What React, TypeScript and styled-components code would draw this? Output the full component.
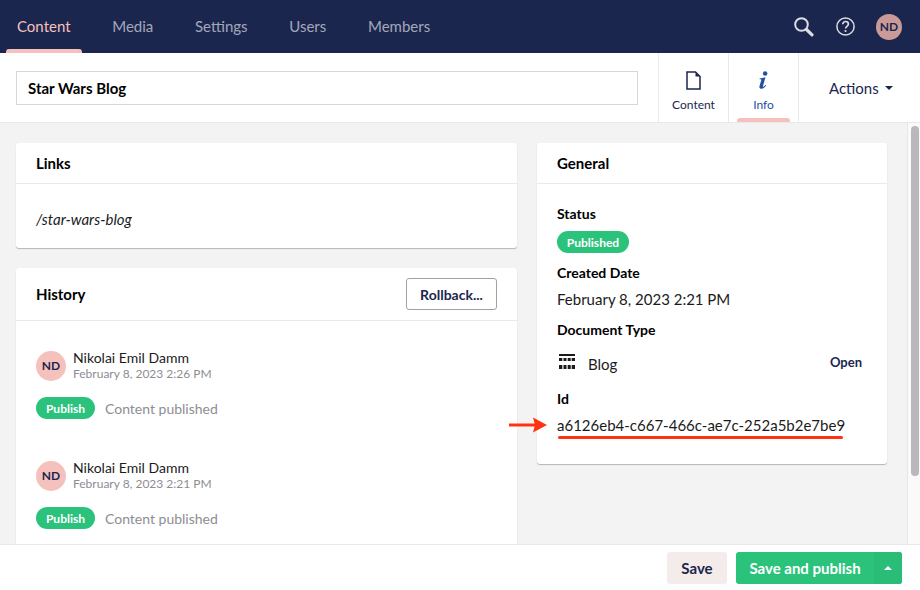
import React from "react";
import styled, { createGlobalStyle } from "styled-components";

const GlobalStyle = createGlobalStyle`
  html, body { margin: 0; padding: 0; }
  body {
    font-family: Lato, "Open Sans", sans-serif;
    color: #1b1b1b;
    background: #fff;
  }
  * { box-sizing: border-box; }
`;

const sections = ["Content", "Media", "Settings", "Users", "Members"];
const history = [
  { date: "February 8, 2023 2:26 PM" },
  { date: "February 8, 2023 2:21 PM" },
];

const DocIcon = () => (
  <svg width="15" height="19" viewBox="0 0 15 19" fill="none" stroke="#1b264f" strokeWidth="1.5">
    <path d="M1 1h8.500L14 5.500V18H1z" />
    <path d="M9.500 1 14 5.500H9.500z" fill="#1b264f" stroke="none" />
  </svg>
);

const InfoIcon = () => (
  <svg width="11" height="19" viewBox="0 0 12 21" fill="#2152a3">
    <circle cx="7.800" cy="2.800" r="2.500" />
    <path d="M1.600 8.300 8.200 7 5.400 16.500c-.2.800.5 1 1 .6l2-1.700.6.600c-1.400 1.800-3 3.600-5.200 3.600-1.900 0-2.700-1.200-2.200-2.900l1.900-6.500c.2-.9-.3-1.100-1.900-1z" />
  </svg>
);

const BlogIcon = () => (
  <BlogSvg width="16" height="15" viewBox="0 0 16 15" fill="#1b1b1b">
    <rect x="0" y="0" width="16" height="2" />
    <rect x="0" y="4" width="3.300" height="3" />
    <rect x="4.500" y="4" width="3" height="3" />
    <rect x="8.700" y="4" width="3" height="3" />
    <rect x="12.700" y="4" width="3.300" height="3" />
    <rect x="0" y="11" width="3.300" height="4" />
    <rect x="4.500" y="11" width="3" height="4" />
    <rect x="8.700" y="11" width="3" height="4" />
    <rect x="12.700" y="11" width="3.300" height="4" />
  </BlogSvg>
);

const App: React.FC = () => {
  return (
    <Page>
      <GlobalStyle />
      <TopBar>
        <Sections>
          {sections.map((s, i) => (
            <SectionLink key={s} $active={i === 0}>
              {s}
            </SectionLink>
          ))}
        </Sections>
        <Tools>
          <svg width="21" height="20" viewBox="0 0 21 20" fill="none" stroke="#dcdde3" strokeLinecap="round">
            <circle cx="7.500" cy="7.500" r="6.300" strokeWidth="2" />
            <path d="M12.500 12.500l5.500 5.300" strokeWidth="3.200" />
          </svg>
          <svg width="19" height="19" viewBox="0 0 19 19" fill="none" stroke="#dcdde3" strokeWidth="1.500">
            <circle cx="9.500" cy="9.500" r="8.600" />
            <path d="M6.800 7.300c0-1.700 1.200-2.800 2.800-2.800s2.800 1 2.800 2.500c0 2.300-2.800 2.300-2.800 4.500" strokeWidth="1.700" />
            <circle cx="9.500" cy="14" r="1.100" fill="#dcdde3" stroke="none" />
          </svg>
          <TopAvatar>ND</TopAvatar>
        </Tools>
      </TopBar>

      <EditorHeader>
        <NameWrap>
          <NameInput readOnly value="Star Wars Blog" />
        </NameWrap>
        <AppTab>
          <AppTabIcon>
            <DocIcon />
          </AppTabIcon>
          <AppTabLabel>Content</AppTabLabel>
        </AppTab>
        <AppTab $active>
          <AppTabIcon>
            <InfoIcon />
          </AppTabIcon>
          <AppTabLabel>Info</AppTabLabel>
        </AppTab>
        <ActionsButton>
          Actions
          <Caret />
        </ActionsButton>
      </EditorHeader>

      <Body>
        <Columns>
          <LeftColumn>
            <Card>
              <CardHeader>
                <CardTitle>Links</CardTitle>
              </CardHeader>
              <LinkRow>/star-wars-blog</LinkRow>
            </Card>
            <Card>
              <HistoryHeader>
                <CardTitle>History</CardTitle>
                <RollbackButton>Rollback...</RollbackButton>
              </HistoryHeader>
              <HistoryList>
                {history.map((h) => (
                  <HistoryItem key={h.date}>
                    <UserRow>
                      <UserAvatar>ND</UserAvatar>
                      <div>
                        <UserName>Nikolai Emil Damm</UserName>
                        <UserDate>{h.date}</UserDate>
                      </div>
                    </UserRow>
                    <ActionRow>
                      <PublishBadge>Publish</PublishBadge>
                      <ActionText>Content published</ActionText>
                    </ActionRow>
                  </HistoryItem>
                ))}
              </HistoryList>
            </Card>
          </LeftColumn>

          <RightColumn>
            <Card>
              <CardHeader>
                <CardTitle>General</CardTitle>
              </CardHeader>
              <GeneralBody>
                <FieldLabel>Status</FieldLabel>
                <StatusBadge>Published</StatusBadge>
                <FieldLabel $top={11}>Created Date</FieldLabel>
                <FieldValue>February 8, 2023 2:21 PM</FieldValue>
                <FieldLabel $top={12}>Document Type</FieldLabel>
                <DocTypeRow>
                  <BlogIcon />
                  <DocTypeName>Blog</DocTypeName>
                  <OpenLink>Open</OpenLink>
                </DocTypeRow>
                <FieldLabel $top={14}>Id</FieldLabel>
                <IdValue>
                  a6126eb4-c667-466c-ae7c-252a5b2e7be9
                  <RedArrow width="38" height="16" viewBox="0 0 38 16">
                    <path d="M0 8h26" stroke="#ff3211" strokeWidth="3" />
                    <path d="M24 0.500 38 8 24 15.500 26 8z" fill="#ff3211" />
                  </RedArrow>
                  <RedLine />
                </IdValue>
              </GeneralBody>
            </Card>
          </RightColumn>
        </Columns>
        <ScrollTrack>
          <ScrollThumb />
        </ScrollTrack>
      </Body>

      <Footer>
        <SaveButton>Save</SaveButton>
        <PublishGroup>
          <PublishMain>Save and publish</PublishMain>
          <PublishCaret>
            <CaretUp />
          </PublishCaret>
        </PublishGroup>
      </Footer>
    </Page>
  );
};

export default App;

const Page = styled.div`
  width: 920px;
  height: 590px;
  display: flex;
  flex-direction: column;
  overflow: hidden;
`;

const TopBar = styled.header`
  height: 53px;
  flex: none;
  background: #1b264f;
  display: flex;
  justify-content: space-between;
  padding: 0 18px 0 6px;
`;

const Sections = styled.nav`
  display: flex;
`;

const SectionLink = styled.a<{ $active?: boolean }>`
  position: relative;
  font-size: 15px;
  line-height: 53px;
  padding: 0 11px;
  margin-right: 19.7px;
  color: ${({ $active }) => ($active ? "#f5c1bc" : "rgba(255,255,255,0.6)")};
  ${({ $active }) =>
    $active &&
    `&::after {
      content: "";
      position: absolute;
      left: 0;
      right: 0;
      bottom: 0;
      height: 4px;
      background: #f5c1bc;
      border-radius: 3px 3px 0 0;
    }`}
`;

const Tools = styled.div`
  display: flex;
  align-items: center;
  gap: 21px;
`;

const TopAvatar = styled.div`
  width: 26px;
  height: 26px;
  border-radius: 50%;
  background: #c99a97;
  color: #1b264f;
  font-size: 12px;
  font-weight: 700;
  display: flex;
  align-items: center;
  justify-content: center;
`;

const EditorHeader = styled.div`
  height: 70px;
  flex: none;
  display: flex;
  background: #fff;
  border-bottom: 1px solid #e9e9eb;
`;

const NameWrap = styled.div`
  flex: 1;
  padding: 18px 20px 0 16px;
`;

const NameInput = styled.input`
  width: 100%;
  height: 34px;
  border: 1px solid #d8d7d9;
  padding: 0 11px;
  font: 700 15px Lato, sans-serif;
  color: #000;
  outline: none;
`;

const AppTab = styled.div<{ $active?: boolean }>`
  position: relative;
  width: 70px;
  border-left: 1px solid #e9e9eb;
  display: flex;
  flex-direction: column;
  align-items: center;
  color: ${({ $active }) => ($active ? "#2152a3" : "#1b264f")};
  ${({ $active }) =>
    $active &&
    `&::after {
      content: "";
      position: absolute;
      left: 8px;
      right: 8px;
      bottom: 0;
      height: 4px;
      background: #f5c1bc;
      border-radius: 3px 3px 0 0;
    }`}
`;

const AppTabIcon = styled.div`
  height: 21px;
  margin-top: 17px;
  display: flex;
  align-items: center;
`;

const AppTabLabel = styled.div`
  font-size: 12px;
  line-height: 15px;
  margin-top: 6px;
`;

const ActionsButton = styled.div`
  width: 122px;
  border-left: 1px solid #e9e9eb;
  color: #1b264f;
  font-size: 15px;
  display: flex;
  align-items: center;
  padding: 0 0 0 30px;
  gap: 6px;
`;

const Caret = styled.span`
  width: 0;
  height: 0;
  border-left: 4px solid transparent;
  border-right: 4px solid transparent;
  border-top: 4px solid #1b264f;
`;

const Body = styled.main`
  flex: 1;
  min-height: 0;
  background: #f4f3f4;
  display: flex;
  overflow: hidden;
`;

const Columns = styled.div`
  flex: 1;
  display: flex;
  gap: 20px;
  padding: 20px 20px 0 16px;
`;

const LeftColumn = styled.div`
  flex: none;
  width: 501px;
  display: flex;
  flex-direction: column;
  gap: 20px;
`;

const RightColumn = styled.div`
  flex: none;
  width: 350px;
`;

const Card = styled.section`
  background: #fff;
  border-radius: 3px;
  box-shadow: 0 1px 1px rgba(0, 0, 0, 0.25);
`;

const CardHeader = styled.div`
  height: 41px;
  padding: 0 20px;
  display: flex;
  align-items: center;
  border-bottom: 1px solid #e9e9eb;
`;

const CardTitle = styled.h3`
  margin: 0;
  font-size: 15px;
  font-weight: 700;
  color: #000;
`;

const LinkRow = styled.div`
  height: 64px;
  padding: 6px 20px 0;
  display: flex;
  align-items: center;
  font-size: 15px;
  font-style: italic;
  color: #1b1b1b;
`;

const HistoryHeader = styled(CardHeader)`
  height: 53px;
  justify-content: space-between;
`;

const RollbackButton = styled.button`
  width: 91px;
  height: 32px;
  background: #fff;
  border: 1px solid #a1a1a5;
  border-radius: 3px;
  color: #1b264f;
  font: 700 14px Lato, sans-serif;
  padding: 0;
`;

const HistoryList = styled.div`
  padding: 29px 20px 20px;
  display: flex;
  flex-direction: column;
  gap: 41px;
`;

const HistoryItem = styled.div``;

const UserRow = styled.div`
  display: flex;
  align-items: center;
  gap: 7px;
`;

const UserAvatar = styled.div`
  width: 30px;
  height: 30px;
  border-radius: 50%;
  background: #f5c1bc;
  color: #1b264f;
  font-size: 12px;
  font-weight: 700;
  display: flex;
  align-items: center;
  justify-content: center;
`;

const UserName = styled.div`
  font-size: 14px;
  line-height: 16px;
  color: #1b1b1b;
`;

const UserDate = styled.div`
  font-size: 12px;
  line-height: 15px;
  color: #8d8d93;
`;

const ActionRow = styled.div`
  display: flex;
  align-items: center;
  gap: 10px;
  margin-top: 16px;
`;

const PublishBadge = styled.span`
  width: 59px;
  height: 22px;
  border-radius: 11px;
  background: #2bc37c;
  color: #fff;
  font-size: 12px;
  font-weight: 700;
  display: flex;
  align-items: center;
  justify-content: center;
`;

const ActionText = styled.span`
  font-size: 14px;
  color: #8d8d93;
`;

const GeneralBody = styled.div`
  padding: 21px 20px 25px;
  height: 280px;
`;

const FieldLabel = styled.div<{ $top?: number }>`
  font-size: 14px;
  font-weight: 700;
  line-height: 18px;
  color: #000;
  margin-top: ${({ $top }) => $top ?? 0}px;
`;

const StatusBadge = styled(PublishBadge)`
  width: 72px;
  margin-top: 8px;
`;

const FieldValue = styled.div`
  font-size: 15px;
  line-height: 20px;
  margin-top: 7px;
  color: #1b1b1b;
`;

const DocTypeRow = styled.div`
  display: flex;
  align-items: center;
  height: 24px;
  margin-top: 13px;
  padding: 0 5px 0 2px;
`;

const BlogSvg = styled.svg`
  margin-top: -6px;
`;

const DocTypeName = styled.span`
  font-size: 15px;
  margin-left: 13px;
  flex: 1;
`;

const OpenLink = styled.a`
  font-size: 13px;
  font-weight: 700;
  color: #1b264f;
  margin-top: -4px;
`;

const IdValue = styled.div`
  position: relative;
  font-size: 15px;
  line-height: 20px;
  margin-top: 7px;
  white-space: nowrap;
`;

const RedArrow = styled.svg`
  position: absolute;
  left: -48px;
  top: 2px;
`;

const RedLine = styled.div`
  position: absolute;
  left: 1px;
  top: 21px;
  width: 285px;
  height: 3px;
  background: #ff3211;
  border-radius: 2px;
`;

const ScrollTrack = styled.div`
  width: 13px;
  flex: none;
  background: #fafafa;
  border-left: 1px solid #e6e6e8;
  padding: 3px 0 0 3px;
`;

const ScrollThumb = styled.div`
  width: 8px;
  height: 350px;
  background: #b9b9bb;
  border-radius: 4px;
`;

const Footer = styled.footer`
  height: 46px;
  flex: none;
  background: #fff;
  border-top: 1px solid #e9e9eb;
  display: flex;
  align-items: center;
  justify-content: flex-end;
  gap: 9px;
  padding: 0 18px 0 0;
`;

const SaveButton = styled.button`
  width: 60px;
  height: 32px;
  border: 0;
  border-radius: 3px;
  background: #f3ecea;
  color: #1b264f;
  font: 700 15px Lato, sans-serif;
`;

const PublishGroup = styled.div`
  display: flex;
  height: 32px;
  border-radius: 3px;
  overflow: hidden;
  background: #2bc37c;
  color: #fff;
`;

const PublishMain = styled.div`
  width: 138px;
  font-size: 15px;
  font-weight: 700;
  display: flex;
  align-items: center;
  justify-content: center;
`;

const PublishCaret = styled.div`
  width: 28px;
  background: #29bd78;
  display: flex;
  align-items: center;
  justify-content: center;
`;

const CaretUp = styled.span`
  width: 0;
  height: 0;
  border-left: 4px solid transparent;
  border-right: 4px solid transparent;
  border-bottom: 4px solid #fff;
`;
